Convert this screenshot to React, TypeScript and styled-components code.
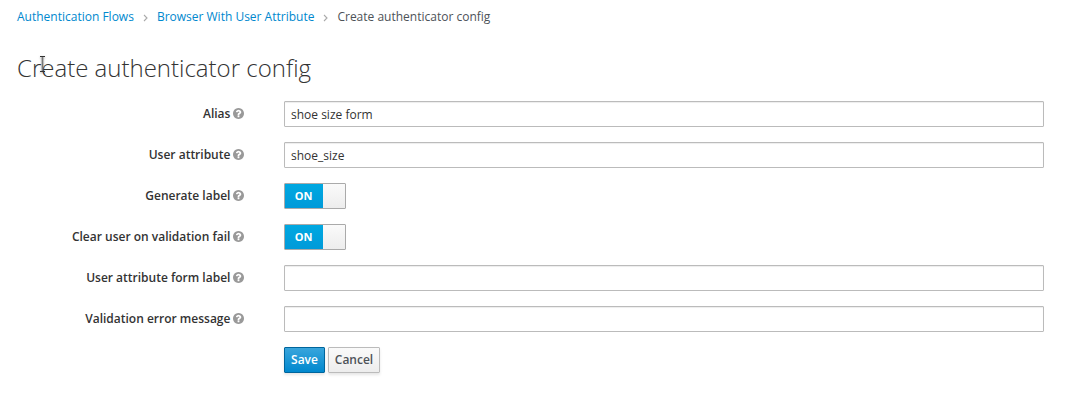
import React from 'react';
import styled, { createGlobalStyle } from 'styled-components';

const Global = createGlobalStyle`
  *, *::before, *::after { box-sizing: border-box; }
  body { margin: 0; background: #fff; color: #333; font: 12px/18px "Open Sans", sans-serif; }
`;
const Page = styled.main`position: relative; width: 1081px; height: 403px; padding: 8px 37px 0 17px; overflow: hidden;`;
const Crumbs = styled.nav`display: flex; align-items: center; height: 18px; color: #4d5258;`;
const Crumb = styled.a`color: #0088ce; text-decoration: none;`;
const Chevron = styled.svg`width: 5px; height: 8px; margin: 1px 9px 0 9px; fill: none; stroke: #aaa; stroke-width: 1.1;`;
const Title = styled.h1`margin: 27px 0 18px; height: 30px; font-size: 24px; line-height: 30px; font-weight: 300;`;
const Row = styled.div`display: flex; align-items: center; height: 26px; margin-bottom: 15px;`;
const Label = styled.label`display: flex; align-items: center; justify-content: flex-end; width: 227px; margin-right: 40px; font-weight: 600;`;
const Help = styled.svg`width: 11px; height: 11px; margin: 0 0 1px 2.6px; flex: none; fill: #999;`;
const Input = styled.input`flex: 1; height: 26px; padding: 2px 6px; border: 1px solid #bbb; border-radius: 1px; color: #333; font: 12px/18px "Open Sans", sans-serif; box-shadow: inset 0 1px 1px rgba(3,3,3,.075); outline: 0;`;
const Switch = styled.button`display: flex; width: 62px; height: 26px; padding: 0; border: 1px solid #aaa; border-radius: 1px; background: linear-gradient(#fafafa, #ededed); overflow: hidden;`;
const On = styled.span`width: 38px; height: 24px; padding-right: 1px; background: linear-gradient(#00a8e1, #009ad9); color: #fff; font: 700 11px/24px "Open Sans", sans-serif; text-align: center;`;
const Actions = styled.div`display: flex; gap: 3px; margin-left: 267px;`;
const Button = styled.button<{ $primary?: boolean }>`
  width: ${p => p.$primary ? 41 : 52}px; height: 26px; padding: 0; border: 1px solid ${p => p.$primary ? '#00659c' : '#bbb'}; border-radius: 1px;
  background: ${p => p.$primary ? 'linear-gradient(#39a5dc, #0088ce)' : 'linear-gradient(#fafafa, #ededed)'}; color: ${p => p.$primary ? '#fff' : '#4d5258'};
  font: 600 12px/18px "Open Sans", sans-serif; box-shadow: 0 2px 3px rgba(3,3,3,.1);
`;
const Cursor = styled.svg`position: absolute; left: 38px; top: 56px; width: 9px; height: 16px; filter: drop-shadow(0 1px 1px rgba(0,0,0,.35));`;

const fields = [
  { label: 'Alias', value: 'shoe size form' }, { label: 'User attribute', value: 'shoe_size' },
  { label: 'Generate label', toggle: true }, { label: 'Clear user on validation fail', toggle: true },
  { label: 'User attribute form label', value: '' }, { label: 'Validation error message', value: '' },
];

const HelpIcon = () => <Help viewBox="0 128 1536 1536"><path d="M896 1376v-192q0-14-9-23t-23-9h-192q-14 0-23 9t-9 23v192q0 14 9 23t23 9h192q14 0 23-9t9-23zm256-672q0-88-55.500-163t-138.500-116-170.500-41q-243 0-371 213-15 24 8 42l132 100q7 6 19 6 16 0 25-12 53-68 86-92 34-24 86-24 48 0 85.500 26t37.500 59q0 38-20 61t-68 45q-63 28-115.500 86.500t-52.500 125.500v36q0 14 9 23t23 9h192q14 0 23-9t9-23q0-19 21.500-49.500t54.500-49.500q32-18 49-28.500t46-35 44.500-48 28-60.500 12.500-81zm384 192q0 209-103 385.500t-279.500 279.500-385.500 103-385.500-103-279.500-279.500-103-385.500 103-385.500 279.500-279.500 385.500-103 385.500 103 279.500 279.500 103 385.500z" /></Help>;

export default function App() {
  return <><Global /><Page>
    <Crumbs>
      <Crumb>Authentication Flows</Crumb><Chevron viewBox="0 0 5 8"><path d="M1 1l3 3-3 3" /></Chevron>
      <Crumb>Browser With User Attribute</Crumb><Chevron viewBox="0 0 5 8"><path d="M1 1l3 3-3 3" /></Chevron>
      <span>Create authenticator config</span>
    </Crumbs>
    <Title>Create authenticator config</Title>
    {fields.map(f => <Row key={f.label}>
      <Label>{f.label}<HelpIcon /></Label>
      {f.toggle ? <Switch><On>ON</On></Switch> : <Input defaultValue={f.value} />}
    </Row>)}
    <Actions><Button $primary>Save</Button><Button>Cancel</Button></Actions>
    <Cursor viewBox="0 0 9 16"><path d="M4.500 1v14" fill="none" stroke="#777" strokeWidth="1.6" /><path d="M2 .5H7M2 15.500H7" fill="none" stroke="#333" /></Cursor>
  </Page></>;
}
